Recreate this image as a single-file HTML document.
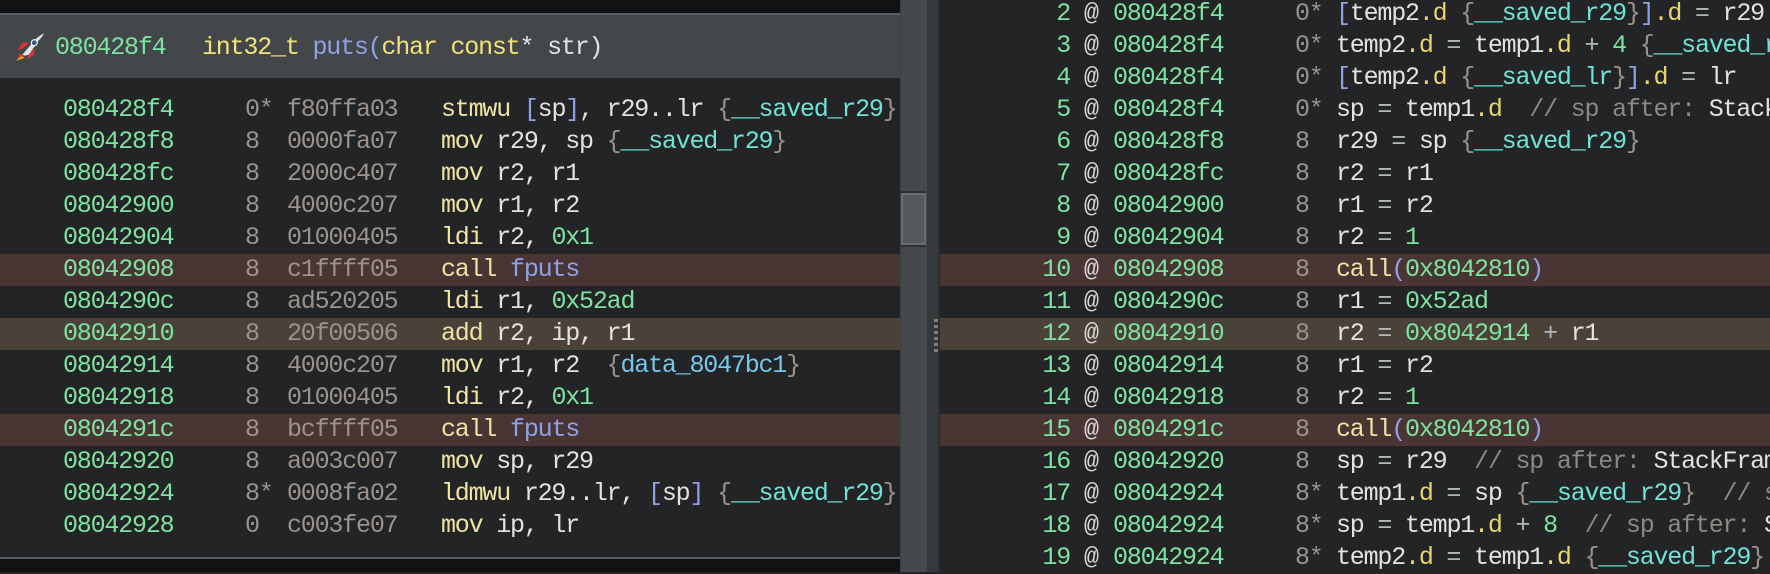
<!DOCTYPE html>
<html><head><meta charset="utf-8"><style>
*{margin:0;padding:0;box-sizing:border-box}
body{width:1770px;height:572px;overflow:hidden;background:#232426;position:relative;font-family:"Liberation Mono",monospace;font-size:25px;letter-spacing:-1.2px;}
.r{position:absolute;height:32px;line-height:32px;white-space:pre;}
.t{position:absolute;top:0;white-space:pre;}
.g{color:#7de3a0}.gr{color:#9b938b}.y{color:#eee4a4}.w{color:#e2e2e2}.c{color:#6fe3d6}.b{color:#8fa2e8}.br{color:#9b938b}.yd{color:#e9d66b}.eq{color:#b0b8b8}.cm{color:#8e8882}.dc{color:#74c8ec}
.red{background:#4a3535}.tan{background:#4a4238}
</style></head><body>
<div style="position:absolute;left:0;top:0;width:900px;height:13px;background:#111213"></div>
<div style="position:absolute;left:0;top:13px;width:900px;height:2px;background:#5c5f62"></div>
<div style="position:absolute;left:0;top:15px;width:900px;height:63px;background:#43474a"></div>
<svg style="position:absolute;left:15px;top:32px" width="30" height="30" viewBox="0 0 28 28">
<path d="M6 22 L1 27 L9 24 Z" fill="#f5a623"/><path d="M5 20 L2 25 L8 22Z" fill="#e33"/>
<path d="M8 15 L2 17 L7 10 L13 10Z" fill="#d33"/><path d="M13 20 L11 26 L18 21 L18 15Z" fill="#d33"/>
<path d="M7 21 L20 6 Q25 2 27 1 Q26 4 22 8 L13 21 Q9 23 7 21Z" fill="#dfe6ee"/>
<circle cx="18" cy="10" r="2.8" fill="#3a5a8a" stroke="#fff" stroke-width="1"/>
</svg>
<div class="r" style="top:32px;left:55px"><span class="g">080428f4</span></div>
<div class="r" style="top:32px;left:202px"><span style="color:#f1e27a">int32_t</span> <span class="b">puts(</span><span style="color:#f1e27a">char const</span><span class="w">* str)</span></div>

<div id="L"></div>
<div style="position:absolute;left:0;top:557px;width:900px;height:2px;background:#5a5d60"></div>
<div style="position:absolute;left:0;top:559px;width:900px;height:13px;background:#111213"></div>

<div style="position:absolute;left:900px;top:0;width:27px;height:572px;background:#45494b;border-left:1px solid #3a3d3f"></div>
<div style="position:absolute;left:901px;top:193px;width:25px;height:52px;background:#55595b;border:2px solid #6a6e70;box-shadow:0 -2px 0 #2f3234,0 2px 0 #2f3234"></div>
<div style="position:absolute;left:927px;top:0;width:13px;height:572px;background:#36393b;border-right:2px solid #2c2e30"></div>
<svg style="position:absolute;left:934px;top:319px" width="5" height="36">
<rect x="0" y="0" width="4" height="3" fill="#7a7e80"/><rect x="0" y="6" width="4" height="3" fill="#7a7e80"/><rect x="0" y="12" width="4" height="3" fill="#7a7e80"/><rect x="0" y="18" width="4" height="3" fill="#7a7e80"/><rect x="0" y="24" width="4" height="3" fill="#7a7e80"/><rect x="0" y="30" width="4" height="3" fill="#7a7e80"/>
</svg>
<div id="R"></div>
<script>
function S(c,t){return '<span class="'+c+'">'+t+'</span>';}
var sv=function(n){return S('br','{')+S('c',n)+S('br','}');};
var L=[
['080428f4','0*','f80ffa03',S('y','stmwu')+' '+S('b','[')+S('w','sp')+S('b',']')+S('w',', r29..lr ')+sv('__saved_r29'),''],
['080428f8','8','0000fa07',S('y','mov')+S('w',' r29, sp ')+sv('__saved_r29'),''],
['080428fc','8','2000c407',S('y','mov')+S('w',' r2, r1'),''],
['08042900','8','4000c207',S('y','mov')+S('w',' r1, r2'),''],
['08042904','8','01000405',S('y','ldi')+S('w',' r2, ')+S('g','0x1'),''],
['08042908','8','c1ffff05',S('y','call')+' '+S('b','fputs'),'red'],
['0804290c','8','ad520205',S('y','ldi')+S('w',' r1, ')+S('g','0x52ad'),''],
['08042910','8','20f00506',S('y','add')+S('w',' r2, ip, r1'),'tan'],
['08042914','8','4000c207',S('y','mov')+S('w',' r1, r2  ')+S('br','{')+S('dc','data_8047bc1')+S('br','}'),''],
['08042918','8','01000405',S('y','ldi')+S('w',' r2, ')+S('g','0x1'),''],
['0804291c','8','bcffff05',S('y','call')+' '+S('b','fputs'),'red'],
['08042920','8','a003c007',S('y','mov')+S('w',' sp, r29'),''],
['08042924','8*','0008fa02',S('y','ldmwu')+S('w',' r29..lr, ')+S('b','[')+S('w','sp')+S('b',']')+' '+sv('__saved_r29'),''],
['08042928','0','c003fe07',S('y','mov')+S('w',' ip, lr'),'']];
var h='';
L.forEach(function(r,i){var top=94+i*32;
h+='<div class="r '+r[4]+'" style="top:'+top+'px;left:0;width:900px;overflow:hidden">'+
'<span class="t g" style="left:63px">'+r[0]+'</span><span class="t gr" style="left:245px">'+r[1]+'</span><span class="t gr" style="left:287px">'+r[2]+'</span><span class="t" style="left:441px">'+r[3]+'</span></div>';});
document.getElementById('L').outerHTML=h;
var e=S('eq',' = '),dd=S('yd','.d');
function tp(n){return S('w','temp'+n)+dd;}
var R=[
['080428f4','0*',S('b','[')+tp(2)+' '+sv('__saved_r29')+S('b',']')+dd+e+S('w','r29'),''],
['080428f4','0*',tp(2)+e+tp(1)+S('eq',' + ')+S('g','4')+' '+sv('__saved_r29'),''],
['080428f4','0*',S('b','[')+tp(2)+' '+sv('__saved_lr')+S('b',']')+dd+e+S('w','lr'),''],
['080428f4','0*',S('w','sp')+e+tp(1)+S('cm','  // sp after: ')+S('w','StackFrame'),''],
['080428f8','8',S('w','r29')+e+S('w','sp ')+sv('__saved_r29'),''],
['080428fc','8',S('w','r2')+e+S('w','r1'),''],
['08042900','8',S('w','r1')+e+S('w','r2'),''],
['08042904','8',S('w','r2')+e+S('g','1'),''],
['08042908','8',S('y','call')+S('b','(')+S('g','0x8042810')+S('b',')'),'red'],
['0804290c','8',S('w','r1')+e+S('g','0x52ad'),''],
['08042910','8',S('w','r2')+e+S('g','0x8042914')+S('eq',' + ')+S('w','r1'),'tan'],
['08042914','8',S('w','r1')+e+S('w','r2'),''],
['08042918','8',S('w','r2')+e+S('g','1'),''],
['0804291c','8',S('y','call')+S('b','(')+S('g','0x8042810')+S('b',')'),'red'],
['08042920','8',S('w','sp')+e+S('w','r29')+S('cm','  // sp after: ')+S('w','StackFrame'),''],
['08042924','8*',tp(1)+e+S('w','sp ')+sv('__saved_r29')+S('cm','  // sp'),''],
['08042924','8*',S('w','sp')+e+tp(1)+S('eq',' + ')+S('g','8')+S('cm','  // sp after: ')+S('w','Stack'),''],
['08042924','8*',tp(2)+e+tp(1)+' '+sv('__saved_r29'),'']];
h='';
R.forEach(function(r,i){var n=i+2,top=-2+i*32;
h+='<div class="r '+r[3]+'" style="top:'+top+'px;left:940px;width:830px;overflow:hidden">'+
'<span class="t g" style="right:'+(830-130)+'px">'+n+'</span><span class="t w" style="left:144px;color:#d8d8d8">@</span><span class="t g" style="left:173px">'+r[0]+'</span><span class="t gr" style="left:355px">'+r[1]+'</span><span class="t" style="left:396px">'+r[2]+'</span></div>';});
document.getElementById('R').outerHTML=h;
</script>
</body></html>
